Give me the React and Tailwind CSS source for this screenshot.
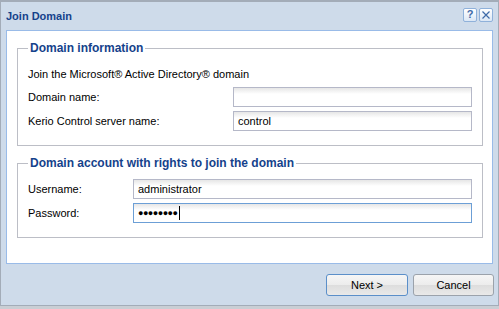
export default function App() {
  const input =
    "h-[20px] border bg-[linear-gradient(#e6e6e6,#ffffff_6px)] px-[4px] flex items-center text-black";

  return (
    <div className="w-[499px] h-[309px] overflow-hidden bg-[#c9ced4] font-['Liberation_Sans',Arial,sans-serif] text-[11px] leading-[14px] text-black">
      <div className="h-[306px] flex flex-col bg-[#cedbea] border-t-2 border-x border-b border-[#a3acb8]">
        {/* title bar */}
        <div className="h-[28px] shrink-0 flex items-center pl-[5px] pr-[5px]">
          <span className="font-bold text-[#15428b]">Join Domain</span>
          <div className="ml-auto flex gap-[2px] -mt-[3px]">
            <div className="w-[14px] h-[14px] rounded-[2px] border border-[#8fb1da] bg-[linear-gradient(#ffffff,#dbe7f5)] flex items-center justify-center text-[11px] font-bold text-[#3e6aa8] leading-none">
              ?
            </div>
            <div className="w-[14px] h-[14px] rounded-[2px] border border-[#8fb1da] bg-[linear-gradient(#ffffff,#dbe7f5)] flex items-center justify-center">
              <svg width="10" height="10" viewBox="0 0 10 10">
                <path d="M1.5 1.5 L8.5 8.5 M8.5 1.5 L1.5 8.5" stroke="#3e6aa8" strokeWidth="1.2" fill="none" />
              </svg>
            </div>
          </div>
        </div>

        {/* content panel */}
        <div className="ml-[5px] w-[487px] h-[234px] shrink-0 bg-white border border-[#99bbe8] flex flex-col pl-[10px]">
          <fieldset className="mt-[10px] w-[466px] border border-[#bcbec6] pl-[10px] pr-[10px] pt-[12px] pb-[14px]">
            <legend className="px-[2px] font-bold text-[#15428b] text-[12px] leading-[14px]">
              Domain information
            </legend>
            <div>Join the Microsoft® Active Directory® domain</div>
            <div className="mt-[6px] flex flex-col gap-[4px]">
              <div className="flex items-center">
                <span className="w-[205px]">Domain name:</span>
                <div className={`${input} border-[#b5b8c8] w-[239px]`}></div>
              </div>
              <div className="flex items-center">
                <span className="w-[205px]">Kerio Control server name:</span>
                <div className={`${input} border-[#b5b8c8] w-[239px]`}>control</div>
              </div>
            </div>
          </fieldset>

          <fieldset className="mt-[10px] w-[466px] border border-[#bcbec6] pl-[10px] pr-[10px] pt-[9px] pb-[14px]">
            <legend className="px-[2px] font-bold text-[#15428b] text-[12px] leading-[14px]">
              Domain account with rights to join the domain
            </legend>
            <div className="flex flex-col gap-[4px]">
              <div className="flex items-center">
                <span className="w-[105px]">Username:</span>
                <div className={`${input} border-[#b5b8c8] w-[339px]`}>administrator</div>
              </div>
              <div className="flex items-center">
                <span className="w-[105px]">Password:</span>
                <div className={`${input} border-[#6c9fd6] w-[339px]`}>
                  <span className="text-[9px] tracking-[-0.5px]">●●●●●●●●</span>
                  <span className="ml-[1px] w-[1px] h-[14px] bg-black"></span>
                </div>
              </div>
            </div>
          </fieldset>
        </div>

        {/* footer */}
        <div className="flex-1 flex items-start justify-end gap-[5px] pt-[10px] pr-[4px]">
          <button className="w-[82px] h-[22px] rounded-[3px] border border-[#5b8fc9] bg-[linear-gradient(#f6f6f6_0%,#ececec_50%,#dddddd_51%,#e9e9e9_100%)] text-[11px] text-black">
            Next &gt;
          </button>
          <button className="w-[81px] h-[22px] rounded-[3px] border border-[#9ba2ab] bg-[linear-gradient(#f6f6f6_0%,#ececec_50%,#dddddd_51%,#e9e9e9_100%)] text-[11px] text-black">
            Cancel
          </button>
        </div>
      </div>
    </div>
  );
}
